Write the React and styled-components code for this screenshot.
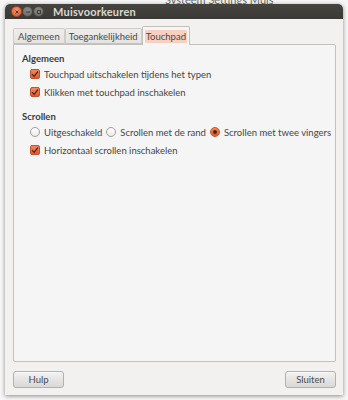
import React from "react";
import styled, { createGlobalStyle } from "styled-components";

const Global = createGlobalStyle`
  html, body { margin: 0; padding: 0; background: #f6f6f6; overflow: hidden; }
  * { box-sizing: border-box; }
`;

const FONT = `"Lato", "Open Sans", "DejaVu Sans", sans-serif`;

const Desktop = styled.div`
  position: relative;
  width: 348px;
  height: 400px;
  background: #f6f6f6;
  overflow: hidden;
  font-family: ${FONT};
`;

const BackdropLine = styled.div`
  margin-top: -7px;
  padding-left: 165px;
  font-size: 11px;
  color: #6b6b6b;
  white-space: nowrap;
`;

const Window = styled.div`
  position: absolute;
  left: 5px;
  top: 4px;
  width: 338px;
  height: 391px;
  display: flex;
  flex-direction: column;
  border-radius: 5px 5px 0 0;
  background: #f2f1f0;
  box-shadow: 0 1px 4px rgba(0, 0, 0, 0.45);
  overflow: hidden;
`;

const TitleBar = styled.div`
  height: 15px;
  flex: none;
  display: flex;
  align-items: center;
  padding-left: 6px;
  background: linear-gradient(#45443f, #3a3935);
`;

const Circle = styled.span`
  width: 11px;
  height: 11px;
  border-radius: 50%;
  display: inline-flex;
  align-items: center;
  justify-content: center;
  background: ${(p) =>
    p.$close
      ? "radial-gradient(circle at 50% 35%, #f59471, #e0562b)"
      : "radial-gradient(circle at 50% 35%, #8e8d88, #64635e)"};
  border: 1px solid ${(p) => (p.$close ? "#b8451f" : "#4a4945")};
`;

const Title = styled.span`
  margin-left: 9px;
  font-size: 11px;
  font-weight: 700;
  color: #dcd8cf;
  letter-spacing: 0.2px;
`;

const Body = styled.div`
  flex: 1;
  display: flex;
  flex-direction: column;
  padding: 7px 7px 7px 8px;
`;

const TabRow = styled.div`
  display: flex;
  align-items: flex-end;
  height: 18px;
  position: relative;
  z-index: 1;
`;

const Tab = styled.div`
  height: ${(p) => (p.$active ? "19px" : "16px")};
  margin-bottom: ${(p) => (p.$active ? "-1px" : "0")};
  padding: 0 ${(p) => p.$pad}px;
  display: flex;
  align-items: center;
  font-size: 9.5px;
  color: #4a4a4a;
  background: ${(p) => (p.$active ? "#f5f5f5" : "linear-gradient(#eeedeb, #e4e3e0)")};
  border: 1px solid ${(p) => (p.$active ? "#c3c1bd" : "#cfcdc9")};
  border-bottom: ${(p) => (p.$active ? "none" : "1px solid #c3c1bd")};
  border-radius: 2px 2px 0 0;
`;

const Focus = styled.span`
  background: #f9cfbf;
  padding: 1px 1px;
  border-radius: 1px;
`;

const Page = styled.div`
  flex: 1;
  background: #f5f5f5;
  border: 1px solid #c3c1bd;
  border-radius: 0 2px 2px 2px;
  padding: 7px 8px;
  display: flex;
  flex-direction: column;
  color: #454545;
  font-size: 9.5px;
`;

const Section = styled.div`
  display: flex;
  flex-direction: column;
  margin-bottom: ${(p) => p.$mb || 0}px;
`;

const Heading = styled.div`
  font-weight: 700;
  font-size: 9.5px;
  height: 13px;
  line-height: 13px;
  color: #3c3c3c;
`;

const Row = styled.div`
  display: flex;
  align-items: center;
  height: 18px;
  padding-left: 8px;
  gap: 4px;
`;

const Option = styled.label`
  display: inline-flex;
  align-items: center;
  gap: 4px;
  white-space: nowrap;
`;

const CheckBox = styled.span`
  width: 10px;
  height: 10px;
  flex: none;
  border-radius: 2px;
  border: 1px solid #c3532b;
  background: linear-gradient(#f4875c, #e2592c);
  display: inline-flex;
  align-items: center;
  justify-content: center;
`;

const Radio = styled.span`
  width: 10px;
  height: 10px;
  flex: none;
  border-radius: 50%;
  border: 1px solid ${(p) => (p.$on ? "#c3532b" : "#a09e9a")};
  background: ${(p) => (p.$on ? "linear-gradient(#f4875c, #e2592c)" : "linear-gradient(#ffffff, #ecebe9)")};
  display: inline-flex;
  align-items: center;
  justify-content: center;
`;

const Dot = styled.span`
  width: 4px;
  height: 4px;
  border-radius: 50%;
  background: #4a2414;
`;

const ButtonRow = styled.div`
  display: flex;
  justify-content: space-between;
  margin-top: 9px;
`;

const Button = styled.button`
  width: 51px;
  height: 17px;
  padding: 0;
  font-family: ${FONT};
  font-size: 9.5px;
  color: #4a4a4a;
  border: 1px solid #b3b1ad;
  border-radius: 3px;
  background: linear-gradient(#f3f2f1, #d9d8d5);
  box-shadow: inset 0 1px 0 rgba(255, 255, 255, 0.7);
`;

const Check = () => (
  <svg width="8" height="8" viewBox="0 0 8 8">
    <path d="M1 4.2 L3.1 6.3 L7 1.5" fill="none" stroke="#4d2514" strokeWidth="1.2" />
  </svg>
);

const Glyph = ({ d }) => (
  <svg width="6" height="6" viewBox="0 0 6 6">
    <path d={d} fill="none" stroke="#3a3935" strokeWidth="1" />
  </svg>
);

export default function App() {
  return (
    <Desktop>
      <Global />
      <BackdropLine>Systeem Settings Muis</BackdropLine>
      <Window>
        <TitleBar>
          <Circle $close>
            <Glyph d="M1.5 1.5 L4.5 4.5 M4.5 1.5 L1.5 4.5" />
          </Circle>
          <Circle>
            <Glyph d="M1 3 L5 3" />
          </Circle>
          <Circle>
            <Glyph d="M1.5 1.5 H4.5 V4.5 H1.5 Z" />
          </Circle>
          <Title>Muisvoorkeuren</Title>
        </TitleBar>
        <Body>
          <TabRow>
            <Tab $pad={4}>Algemeen</Tab>
            <Tab $pad={3}>Toegankelijkheid</Tab>
            <Tab $active $pad={2}>
              <Focus>Touchpad</Focus>
            </Tab>
          </TabRow>
          <Page>
            <Section $mb={9}>
              <Heading>Algemeen</Heading>
              <Row>
                <Option>
                  <CheckBox><Check /></CheckBox>
                  Touchpad uitschakelen tijdens het typen
                </Option>
              </Row>
              <Row>
                <Option>
                  <CheckBox><Check /></CheckBox>
                  Klikken met touchpad inschakelen
                </Option>
              </Row>
            </Section>
            <Section>
              <Heading>Scrollen</Heading>
              <Row>
                <Option>
                  <Radio />
                  Uitgeschakeld
                </Option>
                <Option>
                  <Radio />
                  Scrollen met de rand
                </Option>
                <Option>
                  <Radio $on><Dot /></Radio>
                  Scrollen met twee vingers
                </Option>
              </Row>
              <Row>
                <Option>
                  <CheckBox><Check /></CheckBox>
                  Horizontaal scrollen inschakelen
                </Option>
              </Row>
            </Section>
          </Page>
          <ButtonRow>
            <Button>Hulp</Button>
            <Button>Sluiten</Button>
          </ButtonRow>
        </Body>
      </Window>
    </Desktop>
  );
}
